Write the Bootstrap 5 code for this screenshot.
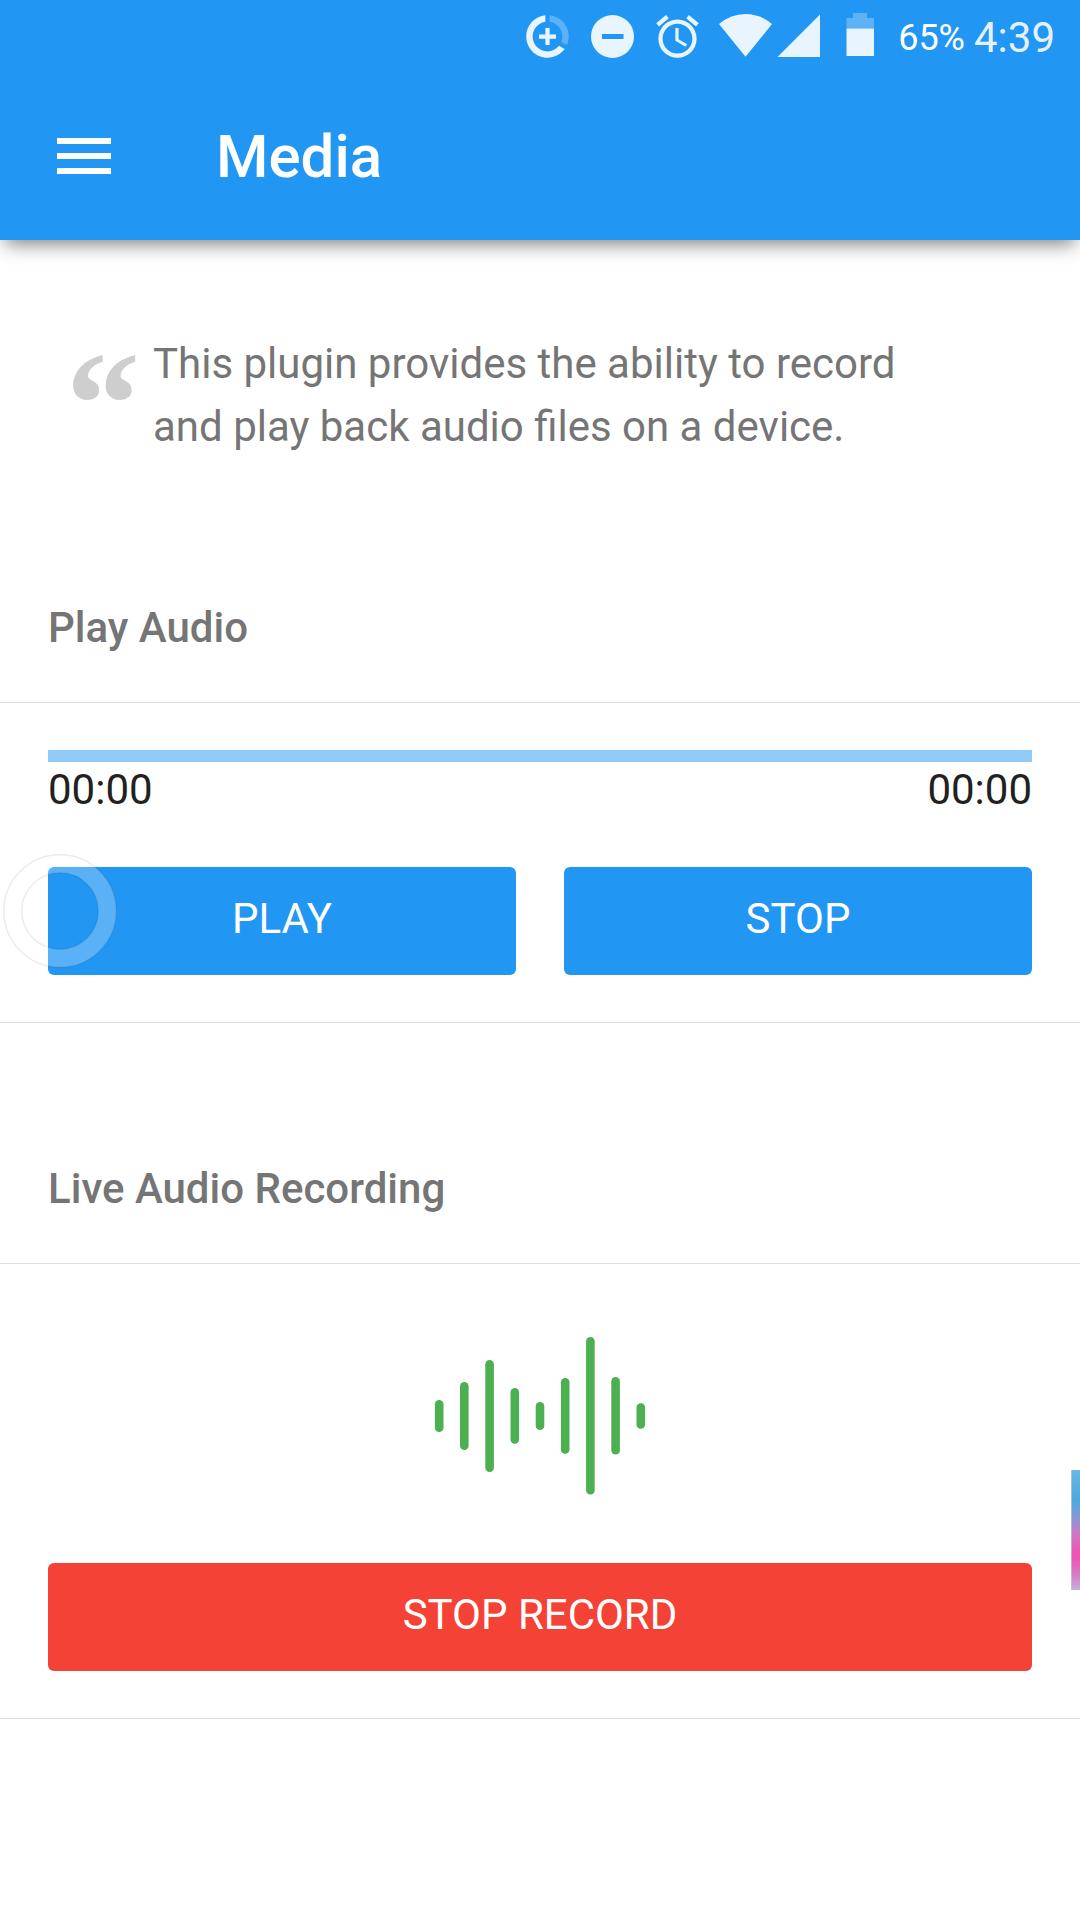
<!DOCTYPE html>
<html lang="en">
<head>
<meta charset="utf-8">
<meta name="viewport" content="width=device-width, initial-scale=1">
<title>Media</title>
<link href="https://cdn.jsdelivr.net/npm/bootstrap@5.3.0/dist/css/bootstrap.min.css" rel="stylesheet">
<style>
  body { font-family: Roboto, sans-serif; font-size: 42px; line-height: 54px; color: #212121; background: #fff; min-height: 1920px; overflow-x: hidden; }
  .app-header { background: #2196f3; height: 240px; box-shadow: 0 9px 18px -5px rgba(0,0,0,.5); }
  .status-bar { height: 72px; color: rgba(255,255,255,.9); padding-right: 25px; }
  .status-icons { width: 354px; height: 72px; margin-right: 24px; }
  .status-pct { font-size: 36px; line-height: 72px; color: #fff; padding-top: 2px; margin-right: 9px; }
  .status-time { line-height: 72px; padding-top: 2px; }
  .app-bar { height: 168px; padding: 0 0 0 57px; }
  .menu-toggle { width: 54px; height: 36px; margin-right: 105px; }
  .app-title { font-size: 60px; font-weight: 500; line-height: 72px; color: #fff; padding-top: 2px; }
  .intro { margin: 92px 120px 0 66px; color: #757575; height: 126px; line-height: 63px; }
  .quote-mark { font: bold 148px/144px "Liberation Serif", serif; color: #cecece; width: 87px; }
  .block-title { font-size: 42px; font-weight: 500; line-height: 50px; color: #757575; padding: 0 48px 49px; margin: 0; }
  .block-title.first { margin-top: 145px; }
  .block-title.next { margin-top: 141px; }
  .block-body { border-top: 1px solid #e0e0e0; border-bottom: 1px solid #e0e0e0; padding: 47px 48px; }
  .track { height: 12px; border-radius: 0; background: #90caf9; }
  .times { padding-top: 1px; }
  .actions { gap: 48px; margin-top: 50px; }
  .action-btn { --bs-btn-color: #fff; --bs-btn-hover-color: #fff; height: 108px; border: 0; border-radius: 6px; font-size: 42px; line-height: 54px; padding: 25px 0 29px; }
  .btn-blue { background: #2196f3; }
  .btn-red { background: #f44336; }
  .wave { width: 212px; height: 158px; margin: 26px auto 68px; }
  .touch-ring { left: 2px; top: 853px; width: 116px; height: 116px; pointer-events: none; }
  .edge-strip { right: 0; top: 1470px; width: 9px; height: 120px; border-left: 1px solid rgba(200,200,215,.7); background: linear-gradient(#6cb8e6 0%, #4ca9dd 25%, #7d9bd8 38%, #c97bc6 52%, #ee55b4 68%, #ee55b4 74%, #d57fc8 88%, #c4b0e0 100%); }
</style>
<script src="https://cdn.jsdelivr.net/npm/bootstrap@5.3.0/dist/js/bootstrap.bundle.min.js"></script>
</head>
<body class="position-relative">
<header class="app-header">
  <div class="status-bar d-flex justify-content-end">
    <svg class="status-icons flex-shrink-0" viewBox="520 0 354 72" fill="#fff" fill-opacity=".9">
      <g transform="translate(522 11) scale(2.125)">
        <path d="M11 8v3H8v2h3v3h2v-3h3v-2h-3V8zM12 19c-3.87 0-7-3.13-7-7 0-3.53 2.61-6.43 6-6.92V2.05c-5.06.5-9 4.76-9 9.95 0 5.52 4.47 10 9.99 10 3.31 0 6.24-1.61 8.06-4.09l-2.6-1.53C16.17 17.98 14.21 19 12 19z"/>
        <path fill-opacity=".27" d="M13 2.05v3.03c3.39.49 6 3.39 6 6.92 0 .9-.18 1.75-.48 2.54l2.6 1.53c.56-1.24.88-2.62.88-4.07 0-5.18-3.95-9.45-9-9.95z"/>
      </g>
      <path fill-rule="evenodd" d="M591 36.5a21.5 21.5 0 1 0 43 0a21.5 21.5 0 1 0-43 0zM602 34v5h21.500v-5z"/>
      <path transform="translate(652 11) scale(2.125)" fill-rule="evenodd" d="M22 5.720l-4.600-3.860-1.290 1.530 4.600 3.860zM7.880 3.390L6.600 1.860 2 5.710l1.290 1.530zM12.500 8H11v6l4.750 2.850.750-1.230-4-2.370zM12 4c-4.970 0-9 4.030-9 9s4.020 9 9 9c4.970 0 9-4.030 9-9s-4.030-9-9-9zm0 16c-3.870 0-7-3.130-7-7s3.130-7 7-7 7 3.130 7 7-3.130 7-7 7z"/>
      <path d="M719 24Q731 14 745.500 14T772 24L745.500 56.800z"/>
      <path d="M777.500 57H820V14.500z"/>
      <path fill-opacity=".27" d="M853 13h14v5h7v10.500h-27.500V18h6.500z"/>
      <path d="M846.500 28.500H874V56h-27.500z"/>
    </svg>
    <span class="status-pct">65%</span>
    <span class="status-time">4:39</span>
  </div>
  <nav class="navbar app-bar justify-content-start">
    <svg class="menu-toggle" viewBox="0 0 54 36" fill="#fff" role="button" aria-label="Menu"><path d="M0 0h54v6H0zM0 15h54v6H0zM0 30h54v6H0z"/></svg>
    <h1 class="app-title m-0">Media</h1>
  </nav>
</header>
<main>
  <div class="intro d-flex">
    <span class="quote-mark flex-shrink-0">“</span>
    <p class="m-0">This plugin provides the ability to record<br>and play back audio files on a device.</p>
  </div>

  <h2 class="block-title first">Play Audio</h2>
  <section class="block-body">
    <div class="progress track"></div>
    <div class="times d-flex justify-content-between"><span>00:00</span><span>00:00</span></div>
    <div class="actions d-flex">
      <button class="btn action-btn btn-blue flex-fill w-50">PLAY</button>
      <button class="btn action-btn btn-blue flex-fill w-50">STOP</button>
    </div>
  </section>

  <h2 class="block-title next">Live Audio Recording</h2>
  <section class="block-body">
    <svg class="wave d-block" viewBox="434 1337 212 158" fill="#4caf50">
      <rect x="434.900" y="1400" width="8.600" height="32" rx="4.300"/>
      <rect x="460" y="1382" width="8.600" height="68" rx="4.300"/>
      <rect x="485.300" y="1360" width="8.600" height="112" rx="4.300"/>
      <rect x="510.500" y="1388" width="8.600" height="55.700" rx="4.300"/>
      <rect x="535.700" y="1402" width="8.600" height="28" rx="4.300"/>
      <rect x="560.900" y="1378" width="8.600" height="75.700" rx="4.300"/>
      <rect x="586.100" y="1337" width="8.600" height="157.600" rx="4.300"/>
      <rect x="611.300" y="1377" width="8.600" height="77.600" rx="4.300"/>
      <rect x="636.500" y="1403.200" width="8.600" height="25.500" rx="4.300"/>
    </svg>
    <button class="btn action-btn btn-red w-100 d-block">STOP RECORD</button>
  </section>
</main>

<svg class="touch-ring position-absolute" viewBox="0 0 116 116" fill="none">
  <circle cx="58" cy="58" r="47.300" stroke="#fff" stroke-opacity=".26" stroke-width="18"/>
  <circle cx="58" cy="58" r="56.200" stroke="#000" stroke-opacity=".08" stroke-width="1.500"/>
  <circle cx="58" cy="58" r="38.300" stroke="#000" stroke-opacity=".08" stroke-width="1.500"/>
</svg>
<div class="edge-strip position-absolute"></div>
</body>
</html>
